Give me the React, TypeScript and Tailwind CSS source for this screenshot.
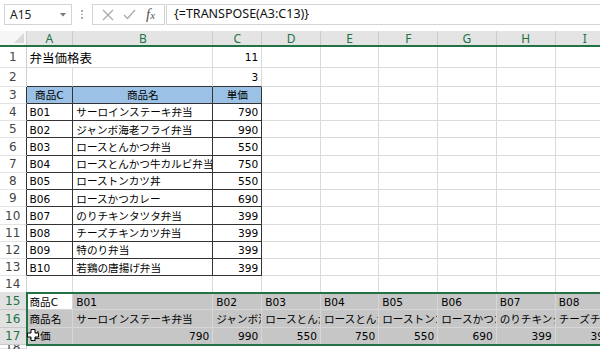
import type { ReactNode } from 'react';

type Cell = {
  t?: string;
  right?: boolean;
  center?: boolean;
};

type Row = {
  n: number;
  h: string;
  cells: Cell[];
};

const colW = ['w-[46.8px]', 'w-[140px]', 'w-[49px]', 'w-[58.7px]', 'w-[58.3px]', 'w-[59px]', 'w-[58.4px]', 'w-[59px]', 'w-[59px]'];
const colNames = ['A', 'B', 'C', 'D', 'E', 'F', 'G', 'H', 'I'];

const items = [
  ['B01', 'サーロインステーキ弁当', '790'],
  ['B02', 'ジャンボ海老フライ弁当', '990'],
  ['B03', 'ロースとんかつ弁当', '550'],
  ['B04', 'ロースとんかつ牛カルビ弁当', '750'],
  ['B05', 'ローストンカツ丼', '550'],
  ['B06', 'ロースかつカレー', '690'],
  ['B07', 'のりチキンタツタ弁当', '399'],
  ['B08', 'チーズチキンカツ弁当', '399'],
  ['B09', '特のり弁当', '399'],
  ['B10', '若鶏の唐揚げ弁当', '399'],
];

const upperRows: Row[] = [
  { n: 2, h: 'h-[18.4px]', cells: [{}, {}, { t: '3', right: true }] },
  { n: 3, h: 'h-[17.3px]', cells: [{ t: '商品C', center: true }, { t: '商品名', center: true }, { t: '単価', center: true }] },
  ...items.map((it, i) => ({
    n: i + 4,
    h: 'h-[17.25px]',
    cells: [{ t: it[0] }, { t: it[1] }, { t: it[2], right: true }],
  })),
  { n: 14, h: 'h-[16.7px]', cells: [] },
];

const selRows: Row[] = [
  { n: 15, h: 'h-[17.3px]', cells: [{ t: '商品C' }, ...items.slice(0, 8).map((it) => ({ t: it[0] }))] },
  { n: 16, h: 'h-[17.3px]', cells: [{ t: '商品名' }, ...items.slice(0, 8).map((it) => ({ t: it[1] }))] },
  { n: 17, h: 'h-[17.3px]', cells: [{ t: '単価' }, ...items.slice(0, 8).map((it) => ({ t: it[2], right: true }))] },
];

function RowHead({ n, active, dark }: { n: number; active?: boolean; dark?: boolean }) {
  return (
    <div
      className={`flex w-[26.5px] shrink-0 items-center justify-center border-b border-r text-[12px] ${
        active ? 'border-b-[#c9c9c9] bg-[#e1e1e1] text-[#217346]' : 'border-b-[#e3e3e3] bg-white text-[#444]'
      } ${dark ? 'border-r-[#333]' : 'border-r-[#cfcfcf]'}`}
    >
      {n}
    </div>
  );
}

function GridRow({ row, sel }: { row: Row; sel?: boolean }) {
  const inTable = row.n >= 3 && row.n <= 13;
  return (
    <div className={`flex ${row.h}`}>
      <RowHead n={row.n} active={sel} dark={inTable} />
      {colW.map((w, c) => {
        const cell = row.cells[c] ?? {};
        const tbl = c < 3 && inTable;
        const topOfTable = c < 3 && row.n === 2;
        const br = tbl ? 'border-r-[#333]' : sel ? 'border-r-[#d6d6d6]' : 'border-r-[#dadada]';
        const bb = tbl || topOfTable ? 'border-b-[#333]' : sel ? 'border-b-[#d6d6d6]' : 'border-b-[#dadada]';
        let bg = 'bg-white';
        if (row.n === 3 && c < 3) bg = 'bg-[#9bc2e6]';
        if (sel && !(row.n === 15 && c === 0)) bg = 'bg-[#c6c6c6]';
        return (
          <div
            key={c}
            className={`${w} shrink-0 overflow-hidden whitespace-nowrap border-b border-r px-[3px] pt-[1.5px] leading-[15px] text-[10.6px] text-black ${br} ${bb} ${bg} ${
              cell.right ? 'text-right' : cell.center ? 'text-center' : 'text-left'
            }`}
          >
            {cell.t}
          </div>
        );
      })}
    </div>
  );
}

function Box({ className, children }: { className: string; children?: ReactNode }) {
  return <div className={`flex h-[21px] items-center border border-[#d4d4d4] bg-white ${className}`}>{children}</div>;
}

function FormulaBar() {
  return (
    <div className="flex h-[31px] items-start bg-white pt-[4px] font-['Noto_Sans',sans-serif]">
      <Box className="ml-[4px] w-[68px] justify-between pl-[5px] pr-[5px] text-[12px] text-[#222]">
        <span>A15</span>
        <svg width="6" height="4" viewBox="0 0 6 4">
          <path d="M0 0 L6 0 L3 3.5 Z" fill="#777" />
        </svg>
      </Box>
      <div className="flex w-[20px] flex-col items-center justify-center gap-[2px] pt-[6px]">
        <span className="h-[1.5px] w-[1.5px] bg-[#aaa]" />
        <span className="h-[1.5px] w-[1.5px] bg-[#aaa]" />
        <span className="h-[1.5px] w-[1.5px] bg-[#aaa]" />
      </div>
      <Box className="w-[73px] justify-around px-[4px]">
        <svg width="12" height="12" viewBox="0 0 12 12">
          <path d="M1 1 L11 11 M11 1 L1 11" stroke="#a9a9a9" strokeWidth="1.2" />
        </svg>
        <svg width="13" height="11" viewBox="0 0 13 11">
          <path d="M1 6 L4.5 9.5 L12 1" stroke="#a9a9a9" strokeWidth="1.2" fill="none" />
        </svg>
        <span className="font-['Liberation_Serif',serif] text-[15px] italic leading-none text-[#555]">
          f<span className="text-[11px]">x</span>
        </span>
      </Box>
      <Box className="ml-[1px] flex-1 border-r-0 pl-[7px] text-[12.5px] text-[#111]">{'{=TRANSPOSE(A3:C13)}'}</Box>
    </div>
  );
}

function ColumnHeader() {
  return (
    <div className="flex h-[16px] border-b-2 border-[#217346] bg-[#e4e4e4] font-['Noto_Sans',sans-serif]">
      <div className="relative w-[26.5px] shrink-0 border-r border-[#cfcfcf] bg-[#f6f6f6]">
        <svg className="absolute bottom-[2px] right-[2px]" width="10" height="10" viewBox="0 0 10 10">
          <path d="M10 0 L10 10 L0 10 Z" fill="#d9d9d9" />
        </svg>
      </div>
      {colW.map((w, i) => (
        <div
          key={i}
          className={`${w} shrink-0 border-r border-[#cbcbcb] text-center text-[12px] leading-[15px] text-[#217346]`}
        >
          {colNames[i]}
        </div>
      ))}
    </div>
  );
}

export default function App() {
  return (
    <div className="h-[349px] w-[600px] overflow-hidden bg-white font-['DejaVu_Sans','Noto_Sans_CJK_JP',sans-serif]">
      <FormulaBar />
      <ColumnHeader />
      <div className="flex h-[21.3px]">
        <RowHead n={1} />
        <div className="relative z-10 w-[46.8px] shrink-0 overflow-visible whitespace-nowrap border-b border-[#dadada] px-[3px] pt-[2px] font-['Noto_Sans_CJK_JP',sans-serif] text-[12.5px] leading-[17px] text-black">
          弁当価格表
        </div>
        <div className="w-[140px] shrink-0 border-b border-r border-[#dadada]" />
        <div className="w-[49px] shrink-0 border-b border-r border-[#dadada] px-[3px] pt-[3px] text-right text-[10.6px] leading-[15px]">
          11
        </div>
        {colW.slice(3).map((w, i) => (
          <div key={i} className={`${w} shrink-0 border-b border-r border-[#dadada]`} />
        ))}
      </div>
      {upperRows.map((r) => (
        <GridRow key={r.n} row={r} />
      ))}
      <div className="relative">
        {selRows.map((r) => (
          <GridRow key={r.n} row={r} sel />
        ))}
        <div className="pointer-events-none absolute -right-[10px] -top-[1px] bottom-[-1px] left-[25.5px] border-2 border-[#217346]" />
        <svg className="absolute left-[27px] top-[36px]" width="12" height="12" viewBox="0 0 12 12">
          <path
            d="M4 0.5 H8 V4 H11.5 V8 H8 V11.5 H4 V8 H0.5 V4 H4 Z"
            fill="white"
            stroke="black"
            strokeWidth="1"
          />
        </svg>
      </div>
      <div className="flex h-[4px]">
        <RowHead n={18} />
      </div>
    </div>
  );
}
